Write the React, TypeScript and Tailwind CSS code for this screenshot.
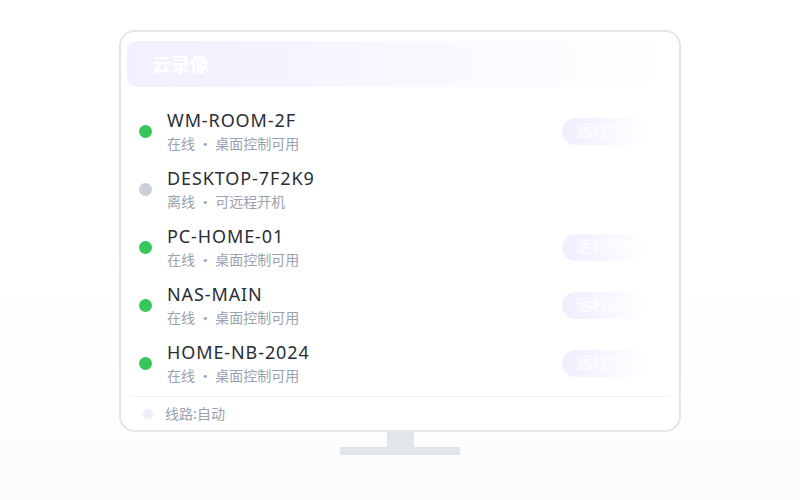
import React from "react";

type Device = { name: string; online: boolean; sub: string };

const devices: Device[] = [
  { name: "WM-ROOM-2F", online: true, sub: "在线 · 桌面控制可用" },
  { name: "DESKTOP-7F2K9", online: false, sub: "离线 · 可远程开机" },
  { name: "PC-HOME-01", online: true, sub: "在线 · 桌面控制可用" },
  { name: "NAS-MAIN", online: true, sub: "在线 · 桌面控制可用" },
  { name: "HOME-NB-2024", online: true, sub: "在线 · 桌面控制可用" },
];

export default function App() {
  return (
    <div
      className="w-[800px] h-[500px] bg-gradient-to-b from-[#ffffff] via-[#ffffff] to-[#fcfcfd] flex flex-col items-center pt-[30px]"
      style={{ fontFamily: '"Noto Sans", "Noto Sans CJK SC", sans-serif' }}
    >
      <div className="w-[562px] h-[402px] border-2 border-[#e4e6ea] rounded-[16px] bg-white px-[6px] pt-[9px] flex flex-col">
        <div className="h-[46px] rounded-[10px] bg-gradient-to-r from-[#f2efff] to-[#ffffff] flex items-center pl-[25px]">
          <span
            className="text-white font-bold text-[19px]"
            style={{ fontFamily: '"Noto Sans CJK SC", sans-serif' }}
          >
            云录像
          </span>
        </div>
        <div className="mt-[15px] flex flex-col px-[2px]">
          {devices.map((d) => (
            <div key={d.name} className="h-[58px] flex items-center pl-[10px] pr-[24px]">
              <div
                className={
                  d.online
                    ? "w-[13px] h-[13px] rounded-full bg-[#34c759] shrink-0"
                    : "w-[13px] h-[13px] rounded-full bg-[#cbd0d7] shrink-0"
                }
              />
              <div className="ml-[15px] flex flex-col flex-1">
                <span className="text-[18px] leading-[22px] text-[#2a2e35] tracking-[0.9px]">
                  {d.name}
                </span>
                <span
                  className="text-[14px] leading-[20px] text-[#9ca2ab] mt-[2px]"
                  style={{ fontFamily: '"Noto Sans CJK SC", sans-serif' }}
                >
                  {d.sub}
                </span>
              </div>
              {d.online && (
                <div className="w-[85px] h-[27px] rounded-full bg-gradient-to-r from-[#f1eeff] via-[#f7f5ff] to-[#ffffff] flex items-center pl-[14px] overflow-hidden">
                  <span
                    className="text-white text-[16px] whitespace-nowrap"
                    style={{ fontFamily: '"Liberation Serif", serif' }}
                  >
                    远程控制
                  </span>
                </div>
              )}
            </div>
          ))}
        </div>
        <div className="mt-[4px] h-px bg-[#eef0f3] mx-[3px]" />
        <div className="flex-1 flex items-center pl-[16px]">
          <div className="w-[10px] h-[10px] rounded-full bg-[#f0edff]" />
          <span
            className="ml-[12px] text-[14px] text-[#9ca2ab]"
            style={{ fontFamily: '"Noto Sans CJK SC", sans-serif' }}
          >
            线路:自动
          </span>
        </div>
      </div>
      <div className="w-[27px] h-[15px] bg-[#e2e5e9]" />
      <div className="w-[120px] h-[8px] bg-[#e2e5e9]" />
    </div>
  );
}
